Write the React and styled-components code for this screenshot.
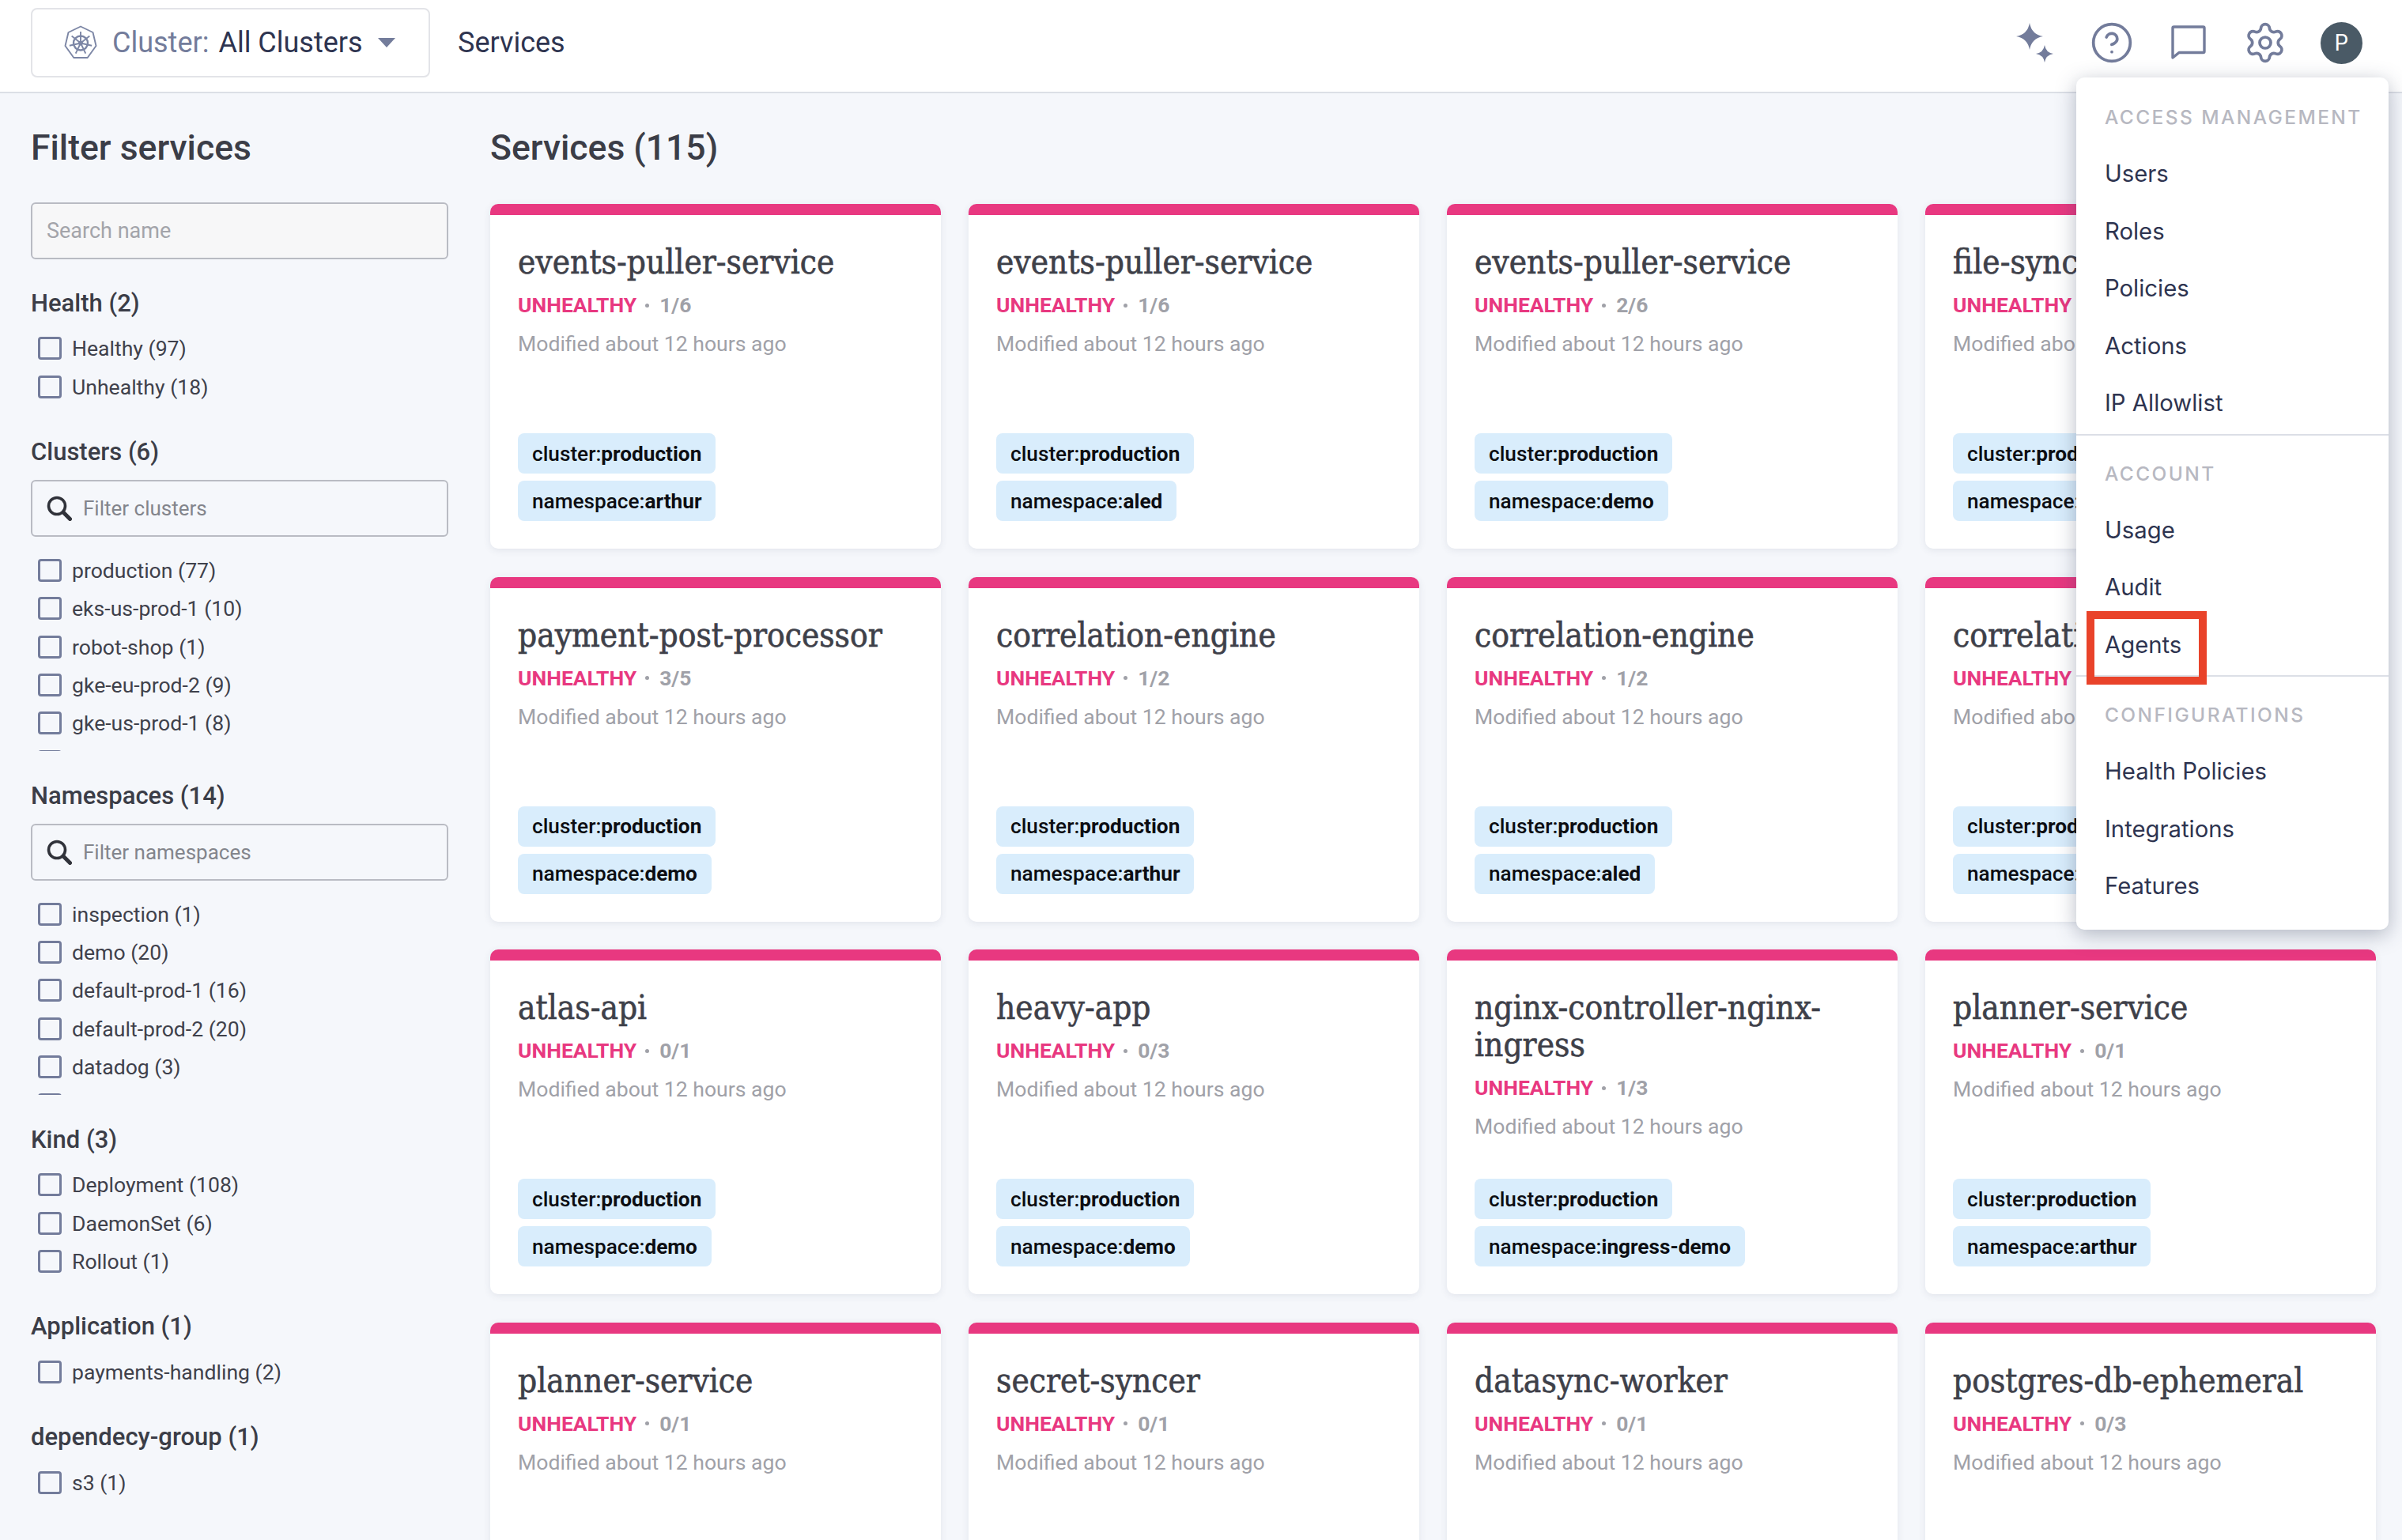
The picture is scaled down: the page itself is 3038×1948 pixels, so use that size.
import React from "react";
import styled, { createGlobalStyle } from "styled-components";
import { CircleHelp, Settings } from "lucide-react";

const filters = [
  { title: "Health (2)", items: ["Healthy (97)", "Unhealthy (18)"] },
  {
    title: "Clusters (6)",
    search: "Filter clusters",
    items: ["production (77)", "eks-us-prod-1 (10)", "robot-shop (1)", "gke-eu-prod-2 (9)", "gke-us-prod-1 (8)", "gke-eu-prod-1 (10)"],
  },
  {
    title: "Namespaces (14)",
    search: "Filter namespaces",
    items: ["inspection (1)", "demo (20)", "default-prod-1 (16)", "default-prod-2 (20)", "datadog (3)", "arthur (12)"],
  },
  { title: "Kind (3)", items: ["Deployment (108)", "DaemonSet (6)", "Rollout (1)"] },
  { title: "Application (1)", items: ["payments-handling (2)"] },
  { title: "dependecy-group (1)", items: ["s3 (1)"] },
];

const services = [
  ["events-puller-service", "1/6", "arthur"],
  ["events-puller-service", "1/6", "aled"],
  ["events-puller-service", "2/6", "demo"],
  ["file-syncer", "1/3", "demo"],
  ["payment-post-processor", "3/5", "demo"],
  ["correlation-engine", "1/2", "arthur"],
  ["correlation-engine", "1/2", "aled"],
  ["correlation-engine", "1/2", "demo"],
  ["atlas-api", "0/1", "demo"],
  ["heavy-app", "0/3", "demo"],
  ["nginx-controller-nginx-ingress", "1/3", "ingress-demo"],
  ["planner-service", "0/1", "arthur"],
  ["planner-service", "0/1", "demo"],
  ["secret-syncer", "0/1", "demo"],
  ["datasync-worker", "0/1", "demo"],
  ["postgres-db-ephemeral", "0/3", "demo"],
];

const menu = [
  { label: "ACCESS MANAGEMENT", items: ["Users", "Roles", "Policies", "Actions", "IP Allowlist"] },
  { label: "ACCOUNT", items: ["Usage", "Audit", "Agents"] },
  { label: "CONFIGURATIONS", items: ["Health Policies", "Integrations", "Features"] },
];

const spokes = [0, 51.4, 102.9, 154.3, 205.7, 257.1, 308.6];

function KubeIcon() {
  return (
    <svg width="44" height="44" viewBox="0 0 44 44" fill="none" stroke="#7c86a5" strokeWidth="1.9" strokeLinejoin="round">
      <polygon points="22,1.5 37.5,9 41.5,26 30.7,41 13.3,41 2.5,26 6.5,9" />
      <circle cx="22" cy="22.5" r="9" strokeWidth="2.4" />
      <circle cx="22" cy="22.5" r="2" fill="#7c86a5" />
      {spokes.map((a) => (
        <line key={a} x1="22" y1="22.5" x2="22" y2="8" transform={`rotate(${a} 22 22.5)`} />
      ))}
    </svg>
  );
}

function SparkleIcon() {
  return (
    <svg width="48" height="50" viewBox="0 0 48 50" fill="#737c9b">
      <path d="M17 0 Q19.5 14.5 34 17 Q19.5 19.5 17 34 Q14.5 19.5 0 17 Q14.5 14.5 17 0Z" />
      <path d="M36 28 Q37.5 37.5 47 39 Q37.5 40.5 36 50 Q34.5 40.5 25 39 Q34.5 37.5 36 28Z" />
    </svg>
  );
}

function ChatIcon() {
  return (
    <svg width="44" height="44" viewBox="0 0 44 44" fill="none" stroke="#737c9b" strokeWidth="3.4" strokeLinejoin="round">
      <path d="M2 3.5 Q2 2 3.5 2 H40.5 Q42 2 42 3.5 V33 Q42 34.5 40.5 34.5 H10 L2 41 Z" />
    </svg>
  );
}

function SearchIcon() {
  return (
    <svg width="32" height="32" viewBox="0 0 32 32" fill="none" stroke="#30323a" strokeLinecap="round">
      <circle cx="13" cy="13" r="10.5" strokeWidth="3.6" />
      <line x1="21" y1="21" x2="29.5" y2="29.5" strokeWidth="5" />
    </svg>
  );
}

function FilterSection({ section }) {
  return (
    <Section>
      <SectionTitle>{section.title}</SectionTitle>
      {section.search && (
        <FilterBox>
          <SearchIcon />
          <FilterInput placeholder={section.search} />
        </FilterBox>
      )}
      <CheckList $clip={Boolean(section.search)}>
        {section.items.map((item) => (
          <CheckRow key={item}>
            <CheckBox />
            {item}
          </CheckRow>
        ))}
      </CheckList>
    </Section>
  );
}

function ServiceCard({ name, pods, namespace }) {
  return (
    <Card>
      <CardTitle>{name}</CardTitle>
      <StatusLine>
        <Unhealthy>UNHEALTHY</Unhealthy>
        <Dot />
        <span>{pods}</span>
      </StatusLine>
      <Modified>Modified about 12 hours ago</Modified>
      <Tags>
        <Tag>cluster:<b>production</b></Tag>
        <Tag>namespace:<b>{namespace}</b></Tag>
      </Tags>
    </Card>
  );
}

export default function App() {
  return (
    <>
      <GlobalStyle />
      <Page>
        <Header>
          <ClusterButton>
            <KubeIcon />
            <ClusterLabel>Cluster:</ClusterLabel>
            <ClusterValue>All Clusters</ClusterValue>
            <Caret />
          </ClusterButton>
          <NavTitle>Services</NavTitle>
          <HeaderIcons>
            <IconSlot><SparkleIcon /></IconSlot>
            <IconSlot><CircleHelp size={56} strokeWidth={1.6} color="#737c9b" /></IconSlot>
            <IconSlot><ChatIcon /></IconSlot>
            <IconSlot><Settings size={56} strokeWidth={1.6} color="#737c9b" /></IconSlot>
            <IconSlot><Avatar>P</Avatar></IconSlot>
          </HeaderIcons>
        </Header>
        <Body>
          <Sidebar>
            <PageTitle>Filter services</PageTitle>
            <NameSearch placeholder="Search name" />
            {filters.map((section) => (
              <FilterSection key={section.title} section={section} />
            ))}
          </Sidebar>
          <Main>
            <PageTitle>Services (115)</PageTitle>
            <CardGrid>
              {services.map(([name, pods, namespace], i) => (
                <ServiceCard key={i} name={name} pods={pods} namespace={namespace} />
              ))}
            </CardGrid>
          </Main>
        </Body>
        <Menu>
          {menu.map((group) => (
            <MenuGroup key={group.label}>
              <MenuLabel>{group.label}</MenuLabel>
              {group.items.map((item) => (
                <MenuItem key={item}>
                  {item}
                  {item === "Agents" && <Highlight />}
                </MenuItem>
              ))}
            </MenuGroup>
          ))}
        </Menu>
      </Page>
    </>
  );
}

const GlobalStyle = createGlobalStyle`
  html, body {
    margin: 0;
    padding: 0;
    background: #f5f7fb;
  }
  * {
    box-sizing: border-box;
  }
`;
const Page = styled.div`
  position: relative;
  width: 3038px;
  height: 1948px;
  overflow: hidden;
  font-family: Roboto, "Liberation Sans", sans-serif;
  background: #f5f7fb;
`;
const Header = styled.header`
  height: 118px;
  padding: 0 28px 8px 39px;
  display: flex;
  align-items: center;
  background: #fff;
  border-bottom: 2px solid #dcdfe6;
`;
const ClusterButton = styled.div`
  width: 505px;
  height: 88px;
  padding-left: 39px;
  display: flex;
  align-items: center;
  background: #fff;
  border: 2px solid #e3e4e8;
  border-radius: 8px;
  font-size: 36px;
`;
const ClusterLabel = styled.span`
  margin-left: 18px;
  color: #737c9b;
`;
const ClusterValue = styled.span`
  margin-left: 12px;
  color: #2e3450;
`;
const Caret = styled.span`
  margin-left: 19px;
  width: 0;
  height: 0;
  border-left: 11px solid transparent;
  border-right: 11px solid transparent;
  border-top: 12px solid #737c9b;
`;
const NavTitle = styled.div`
  margin-left: 35px;
  font-size: 36px;
  color: #2e3450;
`;
const HeaderIcons = styled.div`
  margin-left: auto;
  display: flex;
  align-items: center;
`;
const IconSlot = styled.div`
  width: 97px;
  display: flex;
  align-items: center;
  justify-content: center;
`;
const Avatar = styled.div`
  width: 53px;
  height: 53px;
  border-radius: 50%;
  background: #4a5a66;
  color: #fff;
  display: flex;
  align-items: center;
  justify-content: center;
  font-family: Inter, Roboto, sans-serif;
  font-size: 28px;
`;
const Body = styled.div`
  display: flex;
  padding-top: 47px;
`;
const Sidebar = styled.aside`
  width: 620px;
  flex: none;
  padding: 0 53px 0 39px;
`;
const Main = styled.main`
  flex: 1;
`;
const PageTitle = styled.h1`
  margin: 0 0 47px;
  font-size: 44.5px;
  line-height: 44px;
  font-weight: 500;
  color: #3b3d47;
`;
const NameSearch = styled.input`
  display: block;
  width: 100%;
  height: 72px;
  margin-bottom: -1px;
  padding: 0 18px;
  background: #f7f7f8;
  border: 2px solid #b9bbc3;
  border-radius: 6px;
  font-family: inherit;
  font-size: 27px;
  &::placeholder {
    color: #a3a4aa;
  }
`;
const Section = styled.section`
  margin-top: 36.7px;
`;
const SectionTitle = styled.h2`
  margin: 0 0 15px;
  font-size: 31px;
  line-height: 40px;
  font-weight: 500;
  color: #3b3d47;
`;
const FilterBox = styled.div`
  height: 72px;
  margin-bottom: 18px;
  padding: 0 16px 0 18px;
  display: flex;
  align-items: center;
  gap: 12px;
  border: 2px solid #b9bbc3;
  border-radius: 6px;
`;
const FilterInput = styled.input`
  flex: 1;
  min-width: 0;
  border: 0;
  outline: 0;
  background: transparent;
  font-family: inherit;
  font-size: 26px;
  &::placeholder {
    color: #83858c;
  }
`;
const CheckList = styled.div`
  overflow: hidden;
  ${(p) => (p.$clip ? "height: 253px;" : "margin-top: -2px; padding-bottom: 2px;")}
`;
const CheckRow = styled.div`
  height: 48.4px;
  padding-left: 9px;
  display: flex;
  align-items: center;
  font-size: 26.6px;
  color: #3f414b;
`;
const CheckBox = styled.span`
  width: 30px;
  height: 29px;
  margin-right: 13px;
  flex: none;
  border: 3px solid #737c9b;
  border-radius: 4px;
`;
const CardGrid = styled.div`
  margin-top: 49px;
  display: grid;
  grid-template-columns: repeat(4, 570px);
  grid-auto-rows: 436px;
  column-gap: 35px;
  row-gap: 35.5px;
`;
const Card = styled.article`
  display: flex;
  flex-direction: column;
  padding: 36px 35px 35px;
  background: #fff;
  border-top: 14px solid #e83880;
  border-radius: 10px;
  box-shadow: 0 2px 10px rgba(60, 70, 100, 0.1);
`;
const CardTitle = styled.h3`
  margin: 0;
  font-family: "DejaVu Serif Condensed", "DejaVu Serif", serif;
  font-size: 42px;
  line-height: 47px;
  font-weight: 400;
  color: #3e4049;
  -webkit-text-stroke: 0.6px #3e4049;
`;
const StatusLine = styled.div`
  margin-top: 15px;
  display: flex;
  align-items: center;
  font-size: 26.5px;
  line-height: 32px;
  font-weight: 700;
  color: #a0a1a8;
`;
const Unhealthy = styled.span`
  color: #e83880;
`;
const Dot = styled.span`
  width: 5px;
  height: 5px;
  margin: 0 13px 0 11px;
  border-radius: 50%;
  background: #a0a1a8;
`;
const Modified = styled.div`
  margin-top: 17px;
  font-size: 26.6px;
  line-height: 32px;
  color: #a0a1a8;
`;
const Tags = styled.div`
  margin-top: auto;
  display: flex;
  flex-direction: column;
  align-items: flex-start;
  gap: 9px;
`;
const Tag = styled.span`
  height: 51px;
  padding: 0 18px;
  display: inline-flex;
  align-items: center;
  background: #d9edfc;
  border-radius: 8px;
  font-size: 26.2px;
  font-weight: 500;
  color: #0c0d12;
  b {
    font-weight: 700;
  }
`;
const Menu = styled.nav`
  position: absolute;
  top: 98px;
  left: 2626px;
  width: 395px;
  height: 1078px;
  padding-top: 32px;
  background: #fff;
  border-radius: 10px;
  box-shadow: 0 6px 26px rgba(50, 60, 90, 0.35);
  font-family: Inter, Roboto, sans-serif;
`;
const MenuGroup = styled.div`
  padding-bottom: 2px;
  margin-bottom: 30px;
  border-bottom: 2px solid #dcdfe6;
  &:last-child {
    border-bottom: 0;
    margin-bottom: 0;
  }
`;
const MenuLabel = styled.div`
  padding-left: 36px;
  height: 36px;
  margin-bottom: 18px;
  line-height: 36px;
  font-size: 24.5px;
  font-weight: 500;
  letter-spacing: 2.4px;
  color: #b7b8c1;
`;
const MenuItem = styled.div`
  position: relative;
  width: max-content;
  margin-left: 36px;
  height: 72.5px;
  line-height: 72.5px;
  font-size: 29.3px;
  color: #2e3450;
`;
const Highlight = styled.span`
  position: absolute;
  left: -23px;
  top: -7px;
  width: 152px;
  height: 93px;
  border: 10px solid #e9432a;
`;
